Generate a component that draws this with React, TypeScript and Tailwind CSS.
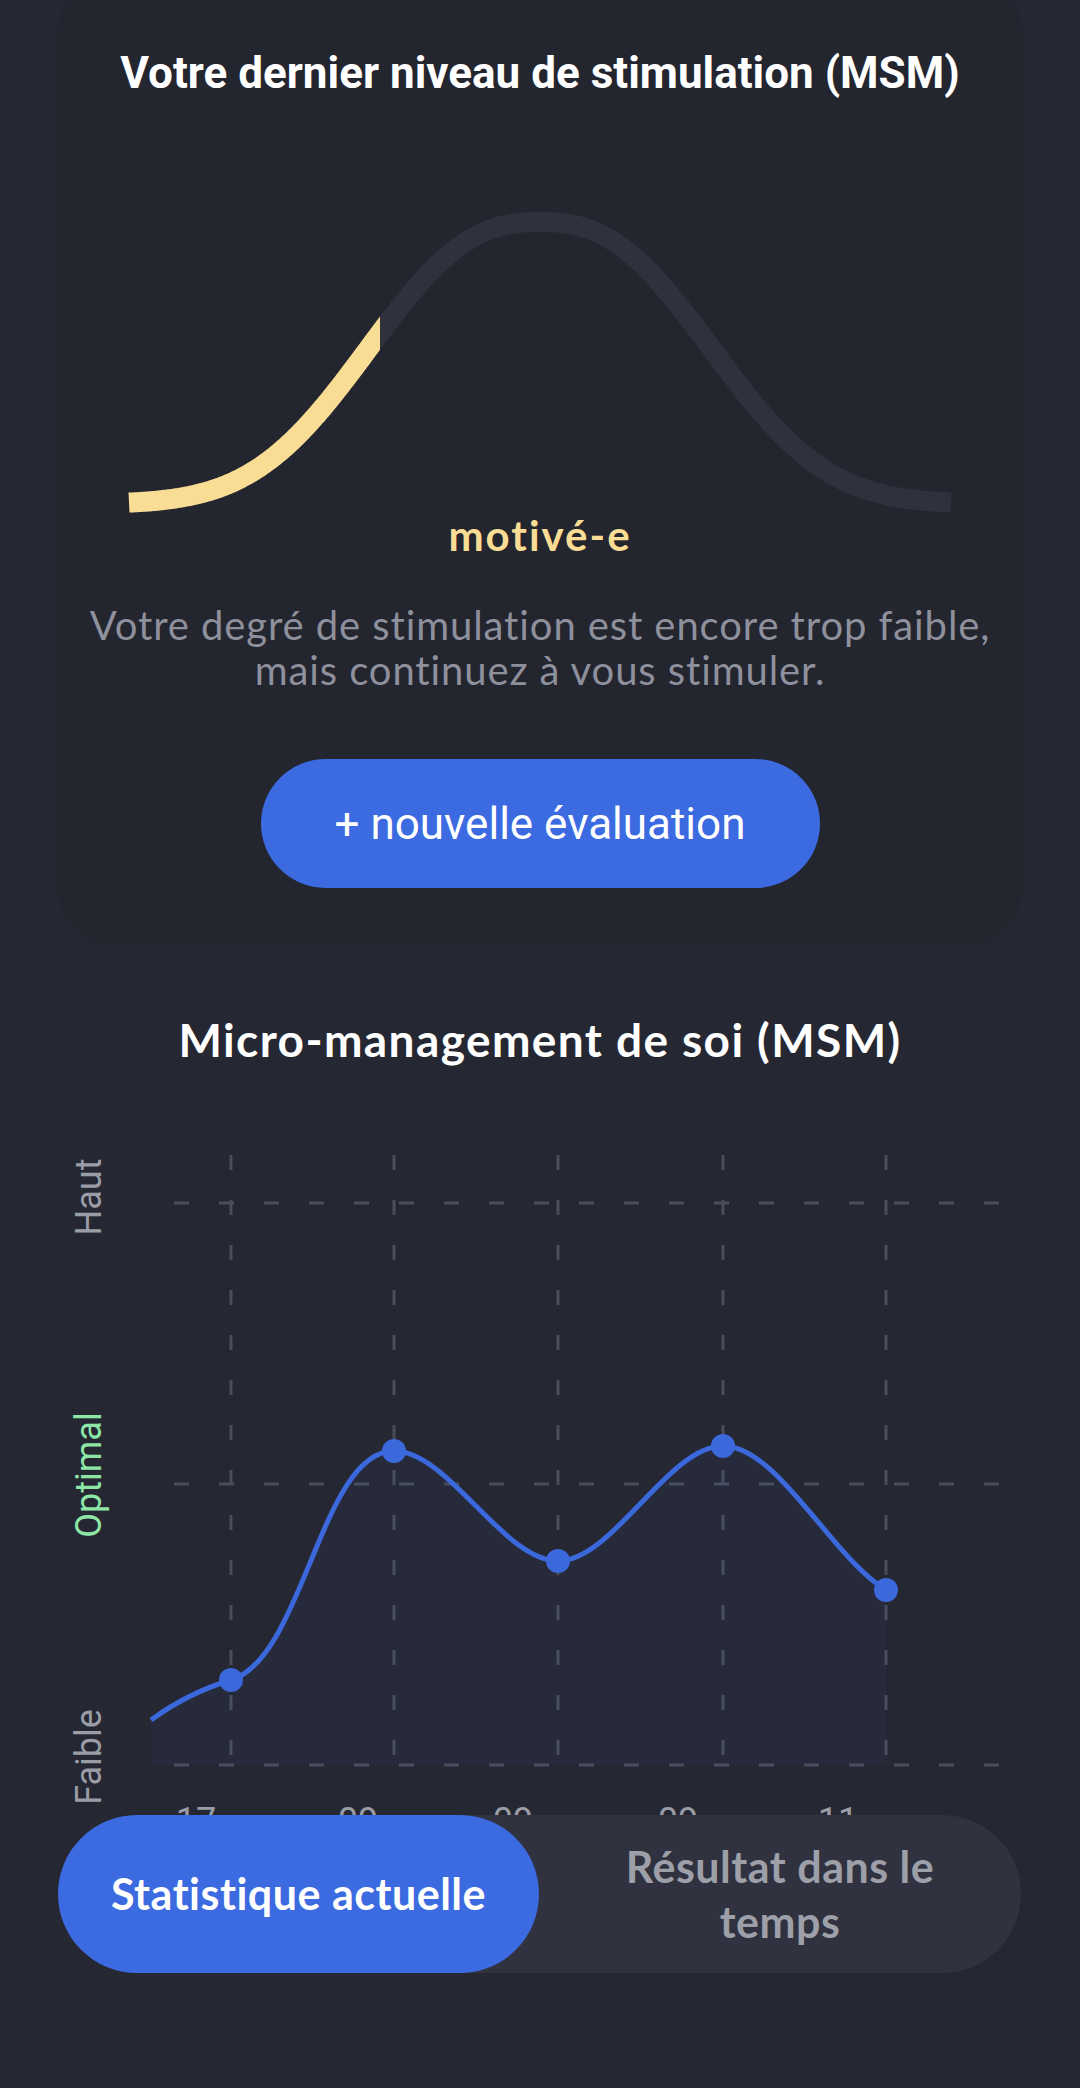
import React from "react";

const BELL_W = 964;

type Pt = { x: number; y: number };

// flat-topped bell, fitted on the reference
function bellPath() {
  const pts: string[] = [];
  for (let x = 71; x <= 893; x += 2) {
    const d = Math.abs(x - 482);
    const y = 314 - 282 * Math.exp(-Math.pow(d / 211, 2.5));
    pts.push(`${x},${y.toFixed(1)}`);
  }
  return "M" + pts.join(" L");
}

function Bell() {
  const d = bellPath();
  return (
    <svg width={BELL_W} height={325} viewBox={`0 0 ${BELL_W} 325`} className="block overflow-visible">
      <defs>
        <clipPath id="done">
          <rect x="0" y="0" width="322" height="340" />
        </clipPath>
      </defs>
      <path d={d} fill="none" stroke="#2f313d" strokeWidth={20} />
      <path d={d} fill="none" stroke="#f9dd94" strokeWidth={20} clipPath="url(#done)" />
    </svg>
  );
}

const dots: Pt[] = [
  { x: 231, y: 580 },
  { x: 394, y: 351 },
  { x: 558, y: 461 },
  { x: 723, y: 346 },
  { x: 886, y: 490 },
];

const line =
  "M151,620 C177.7,600.5 204.3,588 231,580 C304,558 320.6,351 394,351 C448.7,351 503.3,461 558,461 C613,461 668,346 723,346 C777.3,346 831.7,457.4 886,490";

function Chart() {
  const area = `${line} L886,665 L151,665 Z`;
  const cols = [231, 394, 558, 723, 886];
  const labels = [
    { t: "17", x: 196 },
    { t: "09", x: 358 },
    { t: "09", x: 513 },
    { t: "09", x: 678 },
    { t: "11", x: 838 },
  ];
  return (
    <svg width={1080} height={715} viewBox="0 0 1080 715" className="block">
      {[103, 384, 665].map((y) => (
        <line key={y} x1={174} x2={1000} y1={y} y2={y} stroke="#4a4d5a" strokeWidth={3} strokeDasharray="15 30" />
      ))}
      {cols.map((x) => (
        <line key={x} x1={x} x2={x} y1={55} y2={655} stroke="#4a4d5a" strokeWidth={3} strokeDasharray="15 30" />
      ))}
      <path d={area} fill="#3b68db" fillOpacity={0.05} />
      <path d={line} fill="none" stroke="#3b68db" strokeWidth={5} />
      {dots.map((p) => (
        <circle key={p.x} cx={p.x} cy={p.y} r={12} fill="#3b68db" />
      ))}
      <g fontFamily="Roboto, sans-serif" fontSize={36}>
        <text x={89} y={97} fill="#9a9ca6" textAnchor="middle" dominantBaseline="central" transform="rotate(-90 89 97)">
          Haut
        </text>
        <text x={89} y={375} fill="#8de6a6" textAnchor="middle" dominantBaseline="central" transform="rotate(-90 89 375)">
          Optimal
        </text>
        <text x={89} y={657} fill="#9a9ca6" textAnchor="middle" dominantBaseline="central" transform="rotate(-90 89 657)">
          Faible
        </text>
        {labels.map((l, i) => (
          <text key={i} x={l.x} y={733} fill="#9a9ca6" textAnchor="middle">
            {l.t}
          </text>
        ))}
      </g>
    </svg>
  );
}

export default function App() {
  return (
    <div className="min-h-[2088px] w-[1080px] bg-[#252733] overflow-hidden font-['Lato',sans-serif]">
      <div className="mx-[58px] -mt-[23px] rounded-[56px] bg-[#23252f] pt-[70px] pb-[58px] flex flex-col items-center">
        <h1 className="font-['Roboto',sans-serif] font-bold text-[44px] leading-[52px] text-white text-center whitespace-nowrap">
          Votre dernier niveau de stimulation (MSM)
        </h1>
        <div className="mt-[91px]">
          <Bell />
        </div>
        <div className="text-[#f9dd94] font-bold text-[42px] leading-[40px] tracking-[2px]">motivé-e</div>
        <p className="mt-[48px] text-[#8e909c] text-[40px] leading-[45px] tracking-[0.9px] text-center whitespace-nowrap">
          Votre degré de stimulation est encore trop faible,
          <br />
          mais continuez à vous stimuler.
        </p>
        <button className="mt-[66px] w-[559px] h-[129px] rounded-full bg-[#3c6ae0] text-white font-['Roboto',sans-serif] text-[44px]">
          + nouvelle évaluation
        </button>
      </div>

      <h2 className="mt-[69px] text-center text-white font-bold text-[46px] leading-[50px] tracking-[1.4px]">
        Micro-management de soi (MSM)
      </h2>

      <div className="mt-[35px]">
        <Chart />
      </div>

      <div className="ml-[58px] w-[963px] h-[158px] rounded-full bg-[#30323f] flex">
        <button className="w-[481px] h-full rounded-full bg-[#3c6ae0] text-white font-bold text-[43px] tracking-[0.5px]">
          Statistique actuelle
        </button>
        <div className="flex-1 flex items-center justify-center text-center text-[#9d9fa9] font-bold text-[43px] leading-[55px] tracking-[0.5px] px-[60px]">
          Résultat dans le temps
        </div>
      </div>
    </div>
  );
}
